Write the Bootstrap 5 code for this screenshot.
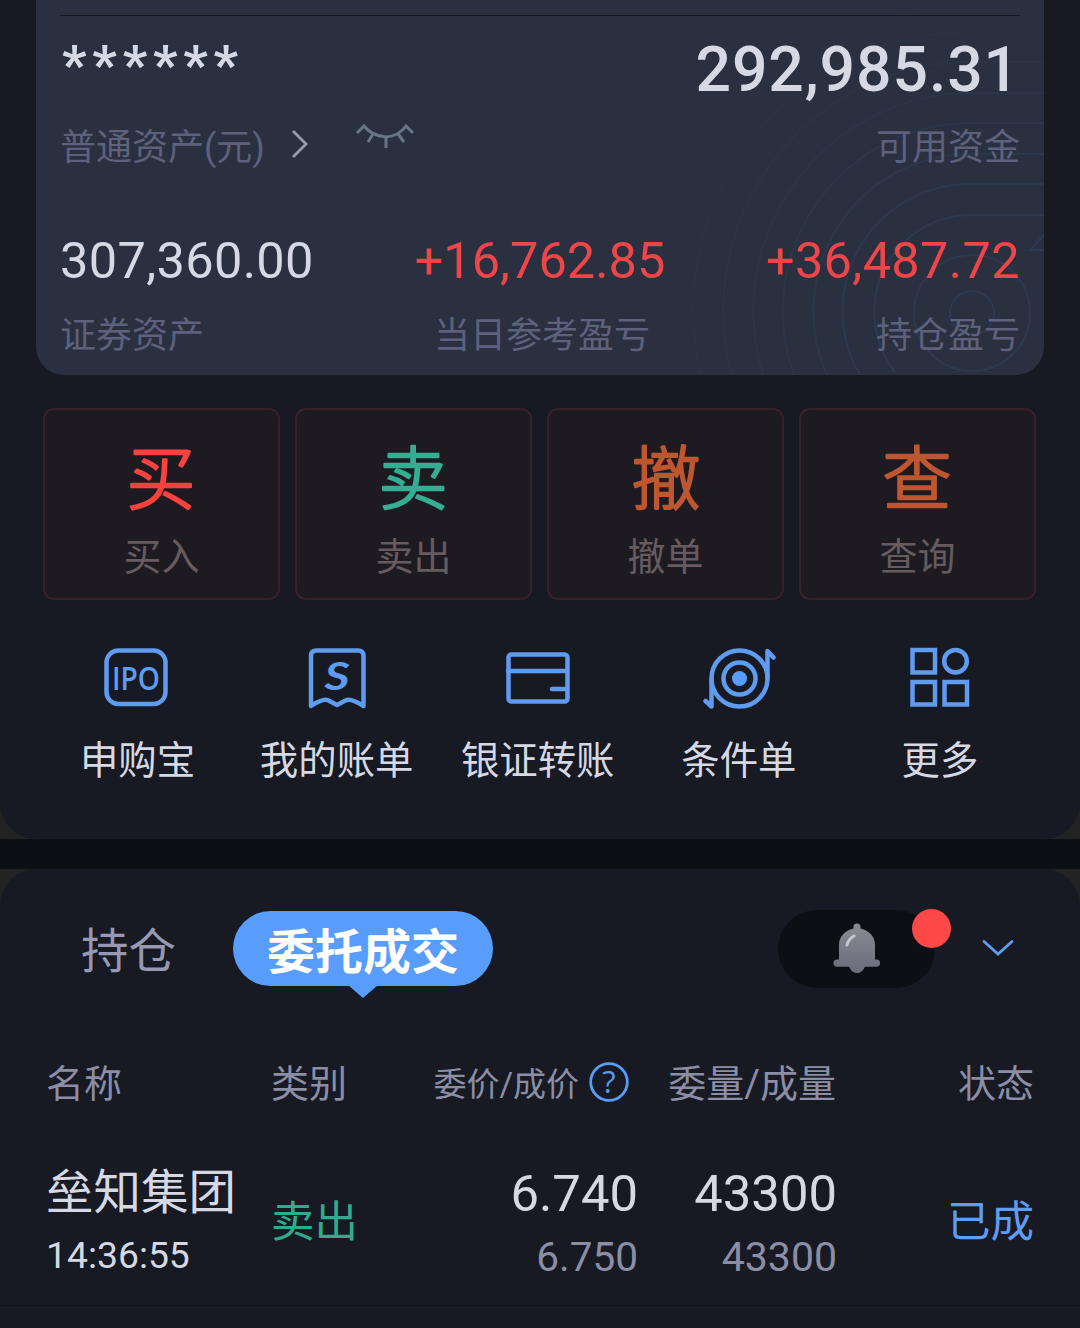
<!DOCTYPE html>
<html lang="zh-CN">
<head>
<meta charset="utf-8">
<meta name="viewport" content="width=device-width, initial-scale=1">
<title>交易</title>
<link href="https://cdn.jsdelivr.net/npm/bootstrap@5.3.0/dist/css/bootstrap.min.css" rel="stylesheet">
<style>
body{background:#222322;color:#d6d9e4;font-family:Roboto,"Noto Sans CJK SC",sans-serif;width:1080px;height:1328px;overflow:hidden;line-height:1}
.panel-top{height:839px;background:#171a22;border-radius:0 0 36px 36px}
.panel-list{background:#171a22;border-radius:36px 36px 0 0;height:459px}
.divider-band{height:30px;background:#0c1014}
.asset{margin:0 36px;height:375px;padding:15px 24px 0;border-radius:0 0 28px 28px;background:#2a3040;overflow:hidden}
.asset .rings{right:0;top:0;left:0}
.asset .content{position:relative}
.rule-line{height:1px;background:#141820}
.r-a{height:104px;padding-top:4px}.r-b{height:52px;padding-top:3px}.r-c{height:72px;margin-top:52px;padding-top:2px}.r-d{height:76px;padding-top:4px}
.big{font-size:62.5px;font-weight:500;letter-spacing:.9px}
.stars{font-size:54px;font-weight:700;letter-spacing:5.8px;margin-left:2px;padding-bottom:11px}
.val{font-size:50.5px}
.wide{letter-spacing:.35px}
.cap-t{font-size:36px;color:#5d617b}
.up{color:#ee4548}
.third{flex:0 0 33.333%}
.acts{padding:33px 44px 0 43px;gap:15px}
.act{flex:1 1 0;height:192px;border:2px solid #38212a;border-radius:11px;background:#1e1a22;padding-top:10px}
.act .tag{font-size:38px;color:#665b5f;margin-top:4px}
.act svg text{font-size:69px;font-weight:300;stroke-width:2.3;stroke-linejoin:round;font-family:"Noto Sans CJK SC",sans-serif}
.tools{padding:45px 39.5px 0 35px}
.tool{flex:1 1 0;font-size:38.4px}
.tool svg{stroke:#5f9bef;fill:none;stroke-width:4.5;stroke-linejoin:round;stroke-linecap:round}
.tool svg text{stroke:none;fill:#5f9bef}
.tool .name{height:60px;padding-top:1px;white-space:nowrap}
.tabs-row{height:160px;padding:41px 0 0 81px}
.tab-a{font-size:47.5px;color:#9699b1;width:152px;height:77px;padding-top:9px}
.tab-b{width:260px;height:75px;margin-top:1px;padding-top:8px;border-radius:38px;background:#589cfc;color:#fff;font-size:48px;font-weight:700}
.tab-b svg{left:115px;top:74px}
.bell{width:157px;height:78px;border-radius:39px;background:#0c0f13}
.bell .dot{width:39px;height:39px;border-radius:50%;background:#fd4848;right:-16px;top:-1px}
.orders{padding:36px 46px 0}
.hd{height:92px;font-size:38px;color:#8b8ea5}
.c1{width:225px}.c2{width:145px}.c3{width:221px}.c4{width:199px}.c5{width:198px}
.hd .sm{font-size:33px}
.hd .c3{padding-right:7px}
.ln1{height:74px}.ln2{height:52px}
.stock{font-size:47.5px}.time{font-size:37.3px;padding-bottom:2px}
.num{font-size:50.8px;margin-right:-1px}.num2{font-size:41px;color:#8b8ea5;margin-right:-1px}
.c3 .num2{font-size:40.5px}
.sell{font-size:43.5px;color:#31ab8d;padding-top:6px}.done{font-size:43.5px;color:#5f9cf3;padding-top:6px}
.end-line{height:1px;background:#101319;margin-top:22px}
</style>
</head>
<body>
<main>
<section class="panel-top">
  <div class="asset position-relative">
    <svg class="rings position-absolute" width="1008" height="375" viewBox="36 0 1008 375" fill="none" stroke="#2c394e" stroke-width="2.2">
      <circle cx="972" cy="313" r="22"/><circle cx="972" cy="313" r="58"/>
      <path d="M1044 215H972A97 97 0 0 0 895 372"/>
      <path opacity=".95" d="M1044 184H972A127 127 0 0 0 860 375"/>
      <path opacity=".85" d="M1044 154H972A157 157 0 0 0 827 375"/>
      <path opacity=".7" d="M1044 123H972A188 188 0 0 0 794 375"/>
      <path opacity=".55" d="M1044 93H972A218 218 0 0 0 763 375"/>
      <path opacity=".4" d="M1044 62H972A248 248 0 0 0 732 375"/>
      <path opacity=".28" d="M1044 32H972A278 278 0 0 0 701 375"/>
      <path opacity=".15" d="M972 2A308 308 0 0 0 670 375"/>
      <path d="M1044 235L1030 250H1044"/>
    </svg>
    <div class="content">
      <div class="rule-line"></div>
      <div class="r-a d-flex justify-content-between align-items-center"><span class="stars">******</span><span class="big">292,985.31</span></div>
      <div class="r-b d-flex align-items-center cap-t">
        <span>普通资产(元)</span>
        <svg style="margin:-5px 0 0 22px" width="24" height="32" viewBox="0 0 24 32" fill="none" stroke="#9a9cab" stroke-width="2.8"><path d="M6 2L19 15L6 28"/></svg>
        <svg style="margin:-24px 0 0 44px" width="60" height="28" viewBox="0 0 60 28" fill="none" stroke="#687586" stroke-width="3"><path d="M2 11L9 4Q17 14 31 15Q44 14 51 4L58 11M18 12L13 20M31 15V26M43 12L49 20"/></svg>
        <span class="ms-auto">可用资金</span>
      </div>
      <div class="r-c d-flex align-items-center val">
        <span class="third wide">307,360.00</span><span class="third text-center up">+16,762.85</span><span class="third text-end up wide">+36,487.72</span>
      </div>
      <div class="r-d d-flex align-items-center cap-t">
        <span class="third">证券资产</span><span class="third text-center ps-1">当日参考盈亏</span><span class="third text-end">持仓盈亏</span>
      </div>
    </div>
  </div>
  <div class="acts d-flex">
    <div class="act d-flex flex-column align-items-center"><svg width="100" height="114"><text x="49" y="84" text-anchor="middle" fill="#f8423f" stroke="#f8423f">买</text></svg><span class="tag">买入</span></div>
    <div class="act d-flex flex-column align-items-center"><svg width="100" height="114"><text x="49" y="84" text-anchor="middle" fill="#35ad91" stroke="#35ad91">卖</text></svg><span class="tag">卖出</span></div>
    <div class="act d-flex flex-column align-items-center"><svg width="100" height="114"><text x="50" y="84" text-anchor="middle" fill="#be5730" stroke="#be5730">撤</text></svg><span class="tag">撤单</span></div>
    <div class="act d-flex flex-column align-items-center"><svg width="100" height="114"><text x="49" y="84" text-anchor="middle" fill="#be5730" stroke="#be5730">查</text></svg><span class="tag">查询</span></div>
  </div>
  <div class="tools d-flex">
    <div class="tool d-flex flex-column align-items-center">
      <svg width="80" height="70" viewBox="96 645 80 70"><rect x="106.5" y="650.5" width="59" height="53.500" rx="12"/><text x="112" y="690" font-family="Open Sans" font-size="32" font-weight="600" textLength="48" lengthAdjust="spacingAndGlyphs">IPO</text></svg>
      <div class="name d-flex align-items-center mt-3 ps-1">申购宝</div></div>
    <div class="tool d-flex flex-column align-items-center">
      <svg width="80" height="70" viewBox="297.500 645 80 70"><path d="M311.500 706V656Q311.500 650.500 317 650.500H358.500Q364 650.500 364 656V706Q350 697 345 701L337.500 705L330 701Q325 697 311.500 706Z"/><text x="325" y="689.500" font-family="Lato" font-style="italic" font-size="38" font-weight="700" textLength="25" lengthAdjust="spacingAndGlyphs">S</text></svg>
      <div class="name d-flex align-items-center mt-3">我的账单</div></div>
    <div class="tool d-flex flex-column align-items-center">
      <svg width="80" height="70" viewBox="498 645 80 70"><rect x="508.500" y="654.500" width="59" height="47" rx="3"/><path d="M508 671H567M552 689H567"/></svg>
      <div class="name d-flex align-items-center mt-3">银证转账</div></div>
    <div class="tool d-flex flex-column align-items-center">
      <svg width="80" height="70" viewBox="699.500 645 80 70"><circle cx="740" cy="678.500" r="28"/><circle cx="740" cy="678.500" r="16"/><circle cx="740" cy="678.500" r="7.500" fill="#589cfc" stroke="none"/><path d="M768 678V651L774 657.500M712 679V706.500L706 701"/></svg>
      <div class="name d-flex align-items-center mt-3">条件单</div></div>
    <div class="tool d-flex flex-column align-items-center">
      <svg width="80" height="70" viewBox="899.500 645 80 70"><g stroke-linejoin="miter"><rect x="912" y="650" width="22.500" height="22.500"/><rect x="912" y="682" width="22.500" height="22.500"/><rect x="944" y="682" width="22.500" height="22.500"/></g><circle cx="955" cy="661.200" r="11.300"/></svg>
      <div class="name d-flex align-items-center mt-3">更多</div></div>
  </div>
</section>
<div class="divider-band"></div>
<section class="panel-list">
  <div class="tabs-row d-flex align-items-start">
    <div class="tab-a d-flex align-items-center">持仓</div>
    <div class="tab-b position-relative d-flex align-items-center justify-content-center flex-shrink-0"><span>委托成交</span>
      <svg class="position-absolute" width="30" height="14" fill="#589cfc"><path d="M0 0H30L15 13Z"/></svg></div>
    <div class="bell position-relative d-flex align-items-center justify-content-center ms-auto">
      <svg width="48" height="52" viewBox="0 0 48 52"><defs><linearGradient id="bg" x1="0" y1="0" x2="0" y2="1"><stop offset="0" stop-color="#8a8b92"/><stop offset="1" stop-color="#696d7a"/></linearGradient></defs><path fill="url(#bg)" d="M20.500 4a3.500 3.500 0 0 1 7 0v1.500C37 8 42 14 42 22V36.500h1.500a3.600 3.600 0 0 1 0 7.200H32Q29 50 24 50T16 43.700H4a3.600 3.600 0 0 1 0-7.200h2V22C6 14 11 8 20.500 5.500Z"/><path d="M14 22Q15.500 16 21 13" fill="none" stroke="#c7c8cc" stroke-width="3" stroke-linecap="round"/></svg>
      <span class="dot position-absolute"></span></div>
    <svg style="margin:28px 65px 0 46px" width="34" height="20" viewBox="0 0 34 20" fill="none" stroke="#5f9bef" stroke-width="2.800" stroke-linecap="round"><path d="M3 3.500L17 16L31 3.500"/></svg>
  </div>
  <div class="orders">
    <div class="hd d-flex align-items-start">
      <span class="c1">名称</span><span class="c2">类别</span>
      <span class="c3 d-flex align-items-center justify-content-end"><span class="sm">委价/成价</span><svg style="margin:-4px 0 0 9px" width="42" height="42" viewBox="0 0 42 42" fill="none" stroke="#5b9bf5" stroke-width="2.800"><circle cx="21" cy="21" r="18.300"/><text x="21" y="32" text-anchor="middle" font-size="31" stroke="none" fill="#5b9bf5" font-family="Open Sans">?</text></svg></span>
      <span class="c4 text-end">委量/成量</span><span class="c5 text-end">状态</span>
    </div>
    <div class="d-flex align-items-center">
      <div class="c1"><div class="ln1 d-flex align-items-center stock">垒知集团</div><div class="ln2 d-flex align-items-center time">14:36:55</div></div>
      <div class="c2 sell">卖出</div>
      <div class="c3"><div class="ln1 d-flex align-items-center justify-content-end num">6.740</div><div class="ln2 d-flex align-items-center justify-content-end num2">6.750</div></div>
      <div class="c4"><div class="ln1 d-flex align-items-center justify-content-end num">43300</div><div class="ln2 d-flex align-items-center justify-content-end num2">43300</div></div>
      <div class="c5 text-end done">已成</div>
    </div>
  </div>
  <div class="end-line"></div>
</section>
</main>
<script src="https://cdn.jsdelivr.net/npm/bootstrap@5.3.0/dist/js/bootstrap.bundle.min.js"></script>
</body>
</html>
